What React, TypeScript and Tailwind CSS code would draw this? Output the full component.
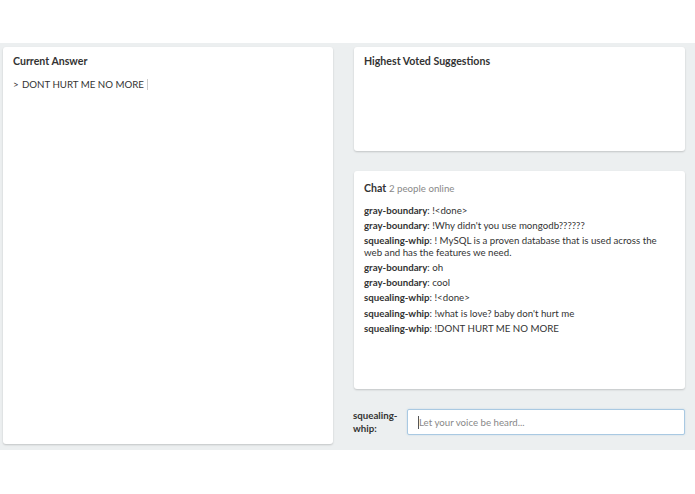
const messages: { user: string; text: string }[] = [
  { user: "gray-boundary", text: "!<done>" },
  { user: "gray-boundary", text: "!Why didn't you use mongodb??????" },
  { user: "squealing-whip", text: "! MySQL is a proven database that is used across the web and has the features we need." },
  { user: "gray-boundary", text: "oh" },
  { user: "gray-boundary", text: "cool" },
  { user: "squealing-whip", text: "!<done>" },
  { user: "squealing-whip", text: "!what is love? baby don't hurt me" },
  { user: "squealing-whip", text: "!DONT HURT ME NO MORE" },
];

function Card({ className, children }: { className: string; children?: React.ReactNode }) {
  return (
    <div className={`rounded-[3px] bg-white px-[10px] pt-[7px] shadow-[0_1px_2px_rgba(0,0,0,0.18)] ${className}`}>
      {children}
    </div>
  );
}

export default function App() {
  return (
    <div className="h-[494px] w-[695px] bg-white pt-[43px] font-['Lato','Open_Sans',sans-serif] text-[#333]">
      <div className="flex h-[407px] gap-[21px] bg-[#eceff0] pl-[3px] pr-[10px] pt-[4px]">
        <Card className="h-[397px] w-[330px]">
          <h2 className="text-[10.6px] font-bold leading-[15px]">Current Answer</h2>
          <div className="mt-[8px] flex items-center text-[9.7px] leading-[14px]">
            <span className="w-[9px]">&gt;</span>
            <span>DONT HURT ME NO MORE</span>
            <span className="ml-[3px] h-[11px] w-px bg-[#ccc]" />
          </div>
        </Card>

        <div className="flex w-[331px] flex-col">
          <Card className="h-[104px]">
            <h2 className="text-[10.6px] font-bold leading-[15px]">Highest Voted Suggestions</h2>
          </Card>

          <Card className="mt-[20px] h-[218px]">
            <h2 className="pt-[3px] text-[10.6px] leading-[15px]">
              <span className="font-bold">Chat</span>{" "}
              <span className="text-[9.7px] text-[#888]">2 people online</span>
            </h2>
            <ul className="mt-[8.5px] flex flex-col gap-[3.8px] text-[9.7px] leading-[11.5px]">
              {messages.map((m, i) => (
                <li key={i}>
                  <span className="font-bold">{m.user}</span>: {m.text}
                </li>
              ))}
            </ul>
          </Card>

          <div className="mt-[20px] flex items-center">
            <label className="w-[54px] shrink-0 -ml-px text-[9.7px] font-bold leading-[13px]">
              squealing-
              <br />
              whip:
            </label>
            <div className="flex h-[26px] flex-1 items-center rounded-[2px] border border-[#a9c9e2] bg-white pl-[10px] shadow-[0_0_2px_rgba(120,170,210,0.35)]">
              <span className="h-[13px] w-px bg-[#555]" />
              <span className="text-[9.7px] text-[#888]">Let your voice be heard...</span>
            </div>
          </div>
        </div>
      </div>
    </div>
  );
}
